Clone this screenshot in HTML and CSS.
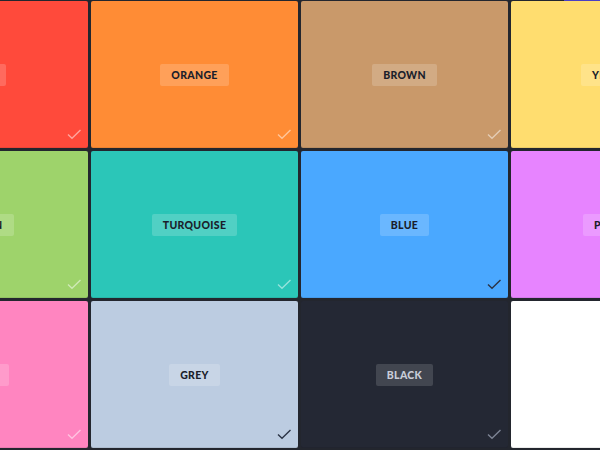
FILE: index.html
```html
<!DOCTYPE html>
<html lang="en">
<head>
    <meta charset="UTF-8">
    <meta name="viewport" content="width=device-width, initial-scale=1.0">
    <title>Colour Picker</title>
    <link rel="stylesheet" href="styles.css">
</head>
<body>

    <div class="top-strip"></div>

    <!-- Colour grid -->
    <div class="swatches" id="swatches"></div>

    <script>
        const colours = [
            { name: "Red", bg: "#ff4a3b", check: "light" },
            { name: "Orange", bg: "#ff8c35", check: "light" },
            { name: "Brown", bg: "#c9996a", check: "light" },
            { name: "Yellow", bg: "#ffdd6f", check: "light" },
            { name: "Green", bg: "#9ed36b", check: "light" },
            { name: "Turquoise", bg: "#2bc6b8", check: "light" },
            { name: "Blue", bg: "#4aa8ff", check: "dark" },
            { name: "Purple", bg: "#e784ff", check: "light" },
            { name: "Pink", bg: "#ff85c0", check: "light" },
            { name: "Grey", bg: "#bccce1", check: "dark" },
            { name: "Black", bg: "#242834", check: "muted", inverse: true },
            { name: "White", bg: "#ffffff", check: "none", hidden: true }
        ];

        const swatches = document.getElementById("swatches");

        colours.forEach(colour => {
            const tile = document.createElement("div");
            tile.classList.add("swatch");
            if (colour.inverse) tile.classList.add("inverse");
            if (colour.hidden) tile.classList.add("plain");
            tile.style.background = colour.bg;
            tile.innerHTML = `
                <span class="swatch-label">${colour.name}</span>
                <svg class="check check-${colour.check}" width="15" height="11" viewBox="0 0 15 11">
                    <path d="M1 5.5 L5 9.2 L13.5 1" fill="none" stroke="currentColor" stroke-width="1.4"/>
                </svg>
            `;
            swatches.appendChild(tile);
        });
    </script>

</body>
</html>
```

FILE: styles.css
```css
body {
    font-family: 'Lato', 'Inter', sans-serif;
    background: #23262e;
    margin: 0;
    padding: 0;
    overflow: hidden;
    position: relative;
}

.top-strip {
    position: absolute;
    top: 0;
    right: 0;
    width: 36px;
    height: 1px;
    background: #4a3fc4;
}

/* Grid */
.swatches {
    display: grid;
    grid-template-columns: repeat(4, 207px);
    grid-auto-rows: 147px;
    gap: 3px;
    margin-left: -119px;
    padding-top: 1px;
}

.swatch {
    position: relative;
    display: flex;
    align-items: center;
    justify-content: center;
    border-radius: 2px;
    box-shadow: inset 0 -1px 0 rgba(0, 0, 0, 0.08);
}

.swatch-label {
    background: rgba(255, 255, 255, 0.18);
    color: #1b1e2b;
    font-size: 10.5px;
    font-weight: 900;
    line-height: 12px;
    letter-spacing: 0.3px;
    text-transform: uppercase;
    padding: 5px 11px;
    border-radius: 2px;
}

.inverse .swatch-label {
    background: rgba(255, 255, 255, 0.14);
    color: #c9cdd8;
}

.plain .swatch-label {
    background: transparent;
    color: #ffffff;
}

/* Check mark */
.check {
    position: absolute;
    right: 6px;
    bottom: 8px;
}

.check-light {
    color: rgba(255, 255, 255, 0.5);
}

.check-dark {
    color: #2b3446;
}

.check-muted {
    color: #7d8494;
}

.check-none {
    display: none;
}
```
